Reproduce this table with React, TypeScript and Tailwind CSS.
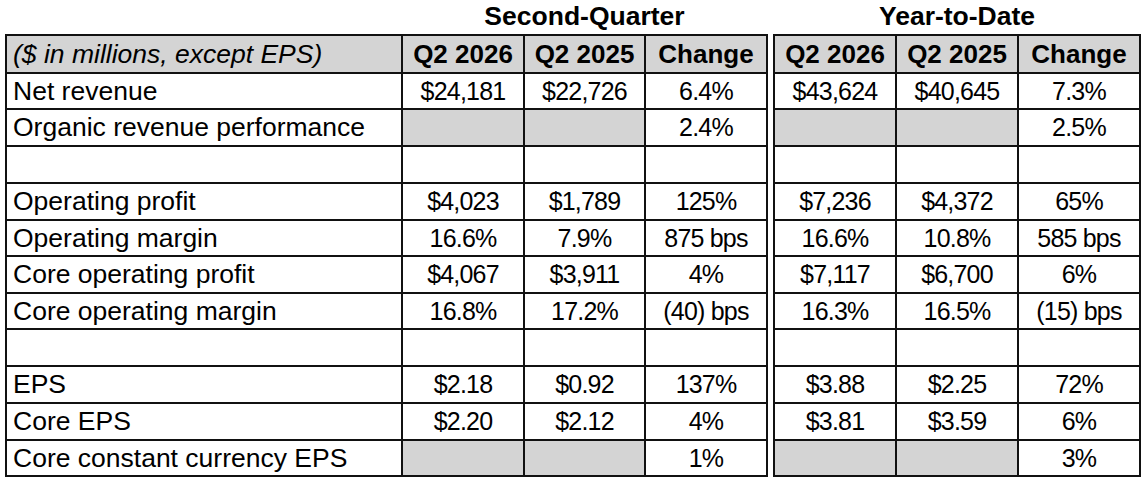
type Row = {
  label: string
  values: (string | null)[]
  h: string
}

const rows: Row[] = [
  { label: 'Net revenue', values: ['$24,181', '$22,726', '6.4%', '$43,624', '$40,645', '7.3%'], h: 'h-[36px]' },
  { label: 'Organic revenue performance', values: [null, null, '2.4%', null, null, '2.5%'], h: 'h-[37px]' },
  { label: '', values: ['', '', '', '', '', ''], h: 'h-[37px]' },
  { label: 'Operating profit', values: ['$4,023', '$1,789', '125%', '$7,236', '$4,372', '65%'], h: 'h-[37px]' },
  { label: 'Operating margin', values: ['16.6%', '7.9%', '875 bps', '16.6%', '10.8%', '585 bps'], h: 'h-[36px]' },
  { label: 'Core operating profit', values: ['$4,067', '$3,911', '4%', '$7,117', '$6,700', '6%'], h: 'h-[37px]' },
  { label: 'Core operating margin', values: ['16.8%', '17.2%', '(40) bps', '16.3%', '16.5%', '(15) bps'], h: 'h-[36px]' },
  { label: '', values: ['', '', '', '', '', ''], h: 'h-[37px]' },
  { label: 'EPS', values: ['$2.18', '$0.92', '137%', '$3.88', '$2.25', '72%'], h: 'h-[37px]' },
  { label: 'Core EPS', values: ['$2.20', '$2.12', '4%', '$3.81', '$3.59', '6%'], h: 'h-[37px]' },
  { label: 'Core constant currency EPS', values: [null, null, '1%', null, null, '3%'], h: 'h-[36px]' },
]

const headers = ['Q2 2026', 'Q2 2025', 'Change']

const cell = 'border-2 border-[#111111]'

function ValueCell({ value }: { value: string | null }) {
  // null means the cell is shaded out in the report
  if (value === null) return <td className={`${cell} bg-[#d4d4d4]`} />
  return (
    <td className={`${cell} text-center text-[25px] tracking-[-0.8px] leading-none`}>{value}</td>
  )
}

export default function App() {
  return (
    <div className="min-h-[482px] w-[1143px] bg-white pl-[5px] text-black" style={{ fontFamily: '"Liberation Sans", Arial, sans-serif' }}>
      <table className="table-fixed border-collapse">
        <colgroup>
          <col className="w-[396px]" />
          <col className="w-[122px]" />
          <col className="w-[121px]" />
          <col className="w-[122px]" />
          <col className="w-[7px]" />
          <col className="w-[122px]" />
          <col className="w-[122px]" />
          <col className="w-[122px]" />
        </colgroup>
        <tbody>
          <tr className="h-[35px]">
            <td />
            <td colSpan={3} className="text-center text-[26.5px] font-bold leading-none pb-[2px]">
              Second-Quarter
            </td>
            <td />
            <td colSpan={3} className="text-center text-[26.5px] font-bold leading-none pb-[2px]">
              Year-to-Date
            </td>
          </tr>
          <tr className="h-[38px] bg-[#d4d4d4]">
            <td className={`${cell} pl-[6px] text-[26.5px] italic leading-none`}>($ in millions, except EPS)</td>
            {headers.map((h) => (
              <td key={'a' + h} className={`${cell} text-center text-[26px] font-bold leading-none`}>
                {h}
              </td>
            ))}
            <td className="bg-white" />
            {headers.map((h) => (
              <td key={'b' + h} className={`${cell} text-center text-[26px] font-bold leading-none`}>
                {h}
              </td>
            ))}
          </tr>
          {rows.map((r, i) => (
            <tr key={i} className={r.h}>
              <td className={`${cell} pl-[6px] text-[26.5px] leading-none whitespace-nowrap`}>{r.label}</td>
              {r.values.slice(0, 3).map((v, j) => (
                <ValueCell key={j} value={v} />
              ))}
              <td />
              {r.values.slice(3).map((v, j) => (
                <ValueCell key={j} value={v} />
              ))}
            </tr>
          ))}
        </tbody>
      </table>
    </div>
  )
}
